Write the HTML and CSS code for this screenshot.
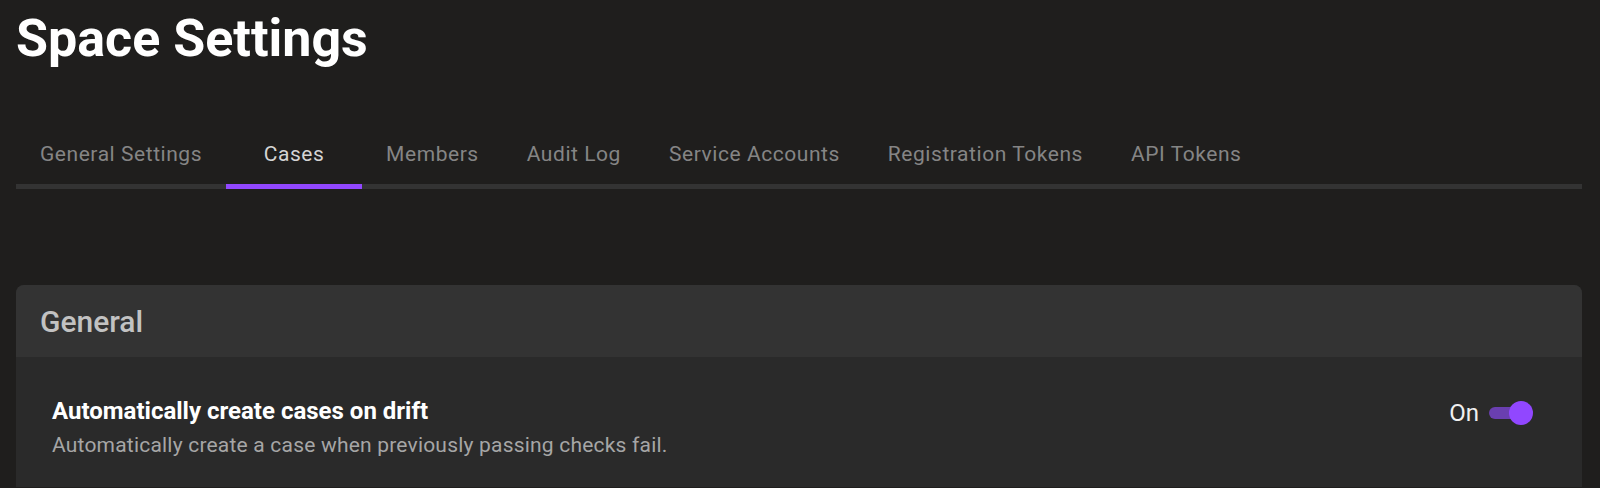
FILE: index.html
```html
<!DOCTYPE html>
<html lang="en">
<head>
<meta charset="utf-8">
<title>Space Settings</title>
<link rel="stylesheet" href="styles.css">
</head>
<body>
<div class="page">
  <h1 class="title">Space Settings</h1>
  <nav class="tabs">
    <div class="tab">General Settings</div>
    <div class="tab active">Cases</div>
    <div class="tab">Members</div>
    <div class="tab">Audit Log</div>
    <div class="tab">Service Accounts</div>
    <div class="tab">Registration Tokens</div>
    <div class="tab">API Tokens</div>
  </nav>
  <section class="card">
    <header class="card-header">General</header>
    <div class="card-body">
      <div class="setting">
        <div class="setting-text">
          <div class="setting-title">Automatically create cases on drift</div>
          <div class="setting-desc">Automatically create a case when previously passing checks fail.</div>
        </div>
        <div class="setting-control">
          <span class="toggle-label">On</span>
          <span class="toggle on"><span class="knob"></span></span>
        </div>
      </div>
    </div>
  </section>
</div>
</body>
</html>
```

FILE: styles.css
```css
* { box-sizing: border-box; }
html, body {
  margin: 0;
  padding: 0;
  background: #1f1e1d;
  font-family: Roboto, "Liberation Sans", sans-serif;
  color: #fff;
}
.page {
  padding: 8px 18px 0 16px;
}
.title {
  margin: 0;
  font-size: 52px;
  font-weight: 700;
  line-height: 62px;
  color: #ffffff;
}
.tabs {
  display: flex;
  margin-top: 59px;
  border-bottom: 5px solid #333333;
}
.tab {
  min-width: 136px;
  padding: 0 24px 5px;
  text-align: center;
  font-size: 21px;
  line-height: 50px;
  color: #858585;
  letter-spacing: 0.55px;
  position: relative;
}
.tab.active {
  color: #d4d4d4;
}
.tab.active::after {
  content: "";
  position: absolute;
  left: 0;
  right: 0;
  bottom: -5px;
  height: 5px;
  background: #9147ff;
}
.card {
  margin-top: 96px;
  border-radius: 8px 8px 0 0;
  background: #2a2a2a;
  overflow: hidden;
}
.card-header {
  background: #333333;
  height: 72px;
  padding: 0 24px;
  display: flex;
  align-items: center;
  font-size: 30px;
  font-weight: 500;
  color: #c2c2c2;
}
.card-body {
  padding: 38px 36px 26px 36px;
}
.setting {
  display: flex;
  justify-content: space-between;
  align-items: flex-start;
}
.setting-title {
  font-size: 24px;
  font-weight: 700;
  color: #ffffff;
  line-height: 32px;
}
.setting-desc {
  margin-top: 2px;
  font-size: 21px;
  letter-spacing: 0.2px;
  color: #a6a6a6;
  line-height: 32px;
}
.setting-control {
  display: flex;
  align-items: center;
  gap: 10px;
  padding-top: 4px;
  margin-right: 13px;
}
.toggle-label {
  font-size: 24px;
  color: #f0f0f0;
}
.toggle {
  position: relative;
  width: 44px;
  height: 24px;
  display: inline-block;
}
.toggle::before {
  content: "";
  position: absolute;
  left: 0;
  right: 4px;
  top: 6px;
  height: 12px;
  border-radius: 6px;
  background: #6a3fb0;
}
.toggle .knob {
  position: absolute;
  right: 0;
  top: 0;
  width: 24px;
  height: 24px;
  border-radius: 50%;
  background: #9147ff;
}
```
